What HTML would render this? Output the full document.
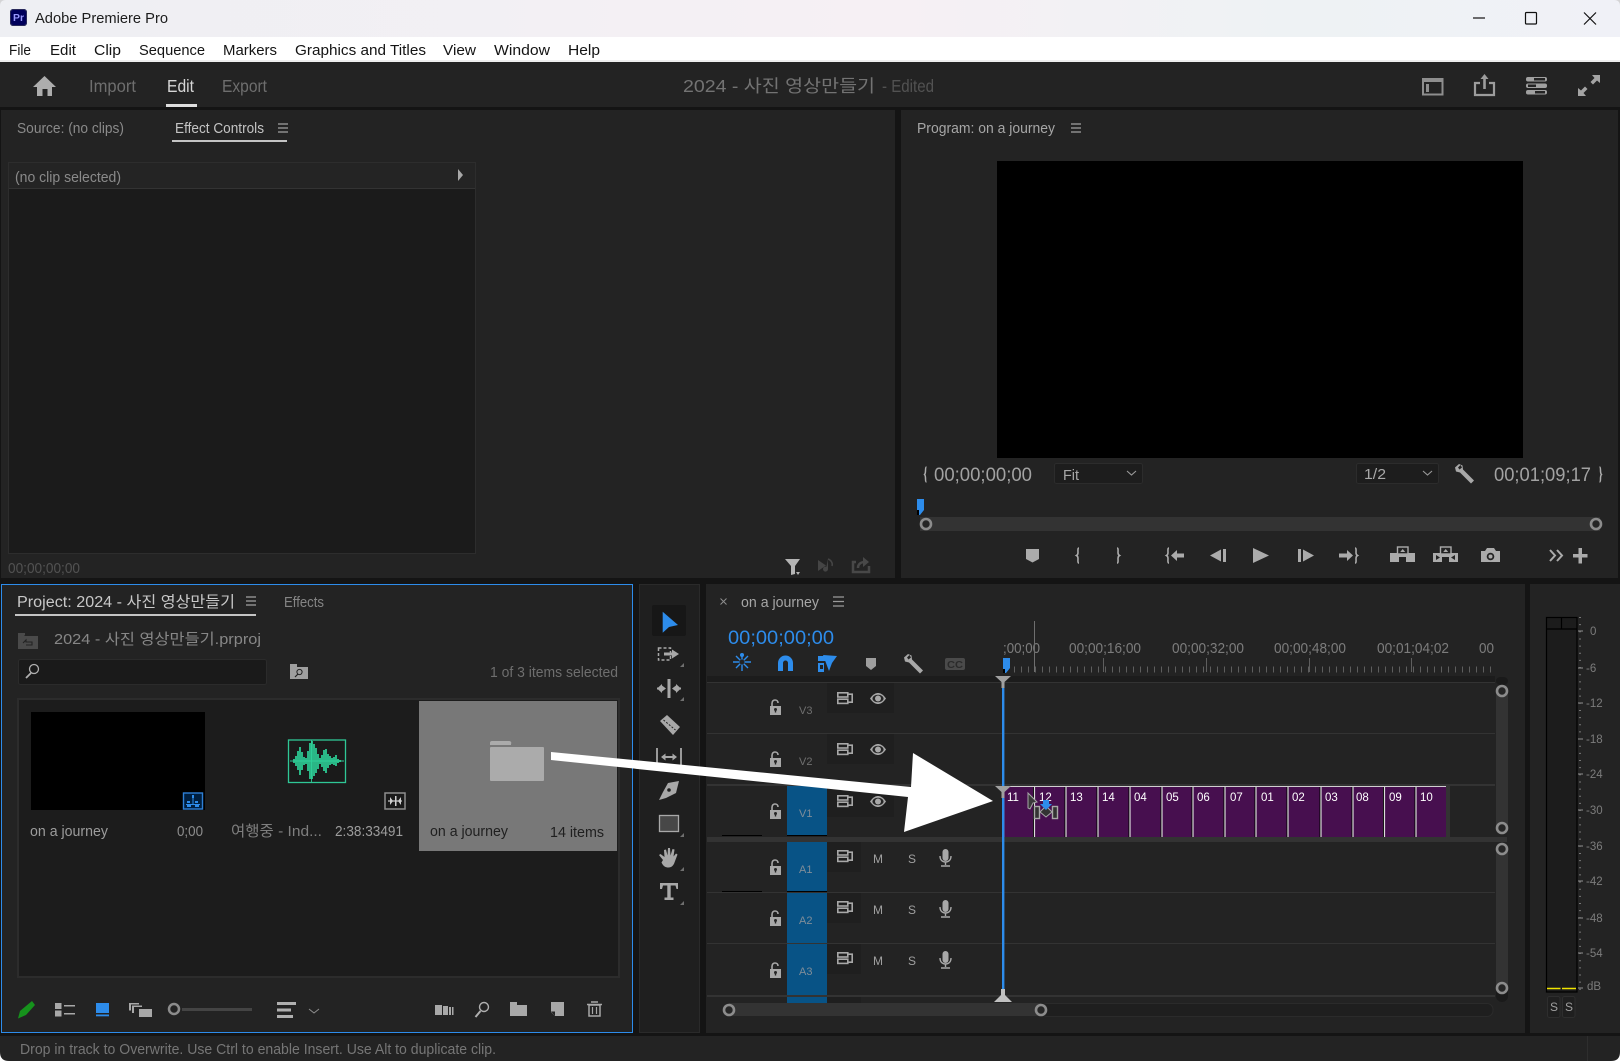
<!DOCTYPE html>
<html><head><meta charset="utf-8"><title>Adobe Premiere Pro</title>
<style>html,body{margin:0;padding:0;background:#fff;overflow:hidden}svg{display:block}text{font-family:"Liberation Sans","Noto Sans CJK KR",sans-serif;white-space:pre}</style></head>
<body>
<svg xmlns="http://www.w3.org/2000/svg" width="1620" height="1061" viewBox="0 0 1620 1061">
<defs>
<linearGradient id="tb" x1="0" x2="1" y1="0" y2="0"><stop offset="0" stop-color="#eeeff3"/><stop offset=".55" stop-color="#f6f0f4"/><stop offset=".8" stop-color="#eef2f4"/><stop offset="1" stop-color="#f0f1f7"/></linearGradient>
<g id="tg" fill="none" stroke="#a8a8a8" stroke-width="1.6"><rect x=".8" y=".8" width="10" height="4.2"/><rect x=".8" y="7.2" width="10" height="4.2"/><path d="M11 2.2h4.2v8H11" /></g>
<g id="eye"><path d="M0 5.5C3 1 6 0 8 0s5 1 8 5.5C13 10 10 11 8 11S3 10 0 5.5Z" fill="#a8a8a8"/><ellipse cx="8" cy="5.5" rx="5.6" ry="3.8" fill="#262626"/><circle cx="8" cy="5.5" r="3" fill="#a8a8a8"/></g>
<g id="lock"><path d="M2 7V3.5C2 1 3.5 0 5 0s3 1 3 3" fill="none" stroke="#a8a8a8" stroke-width="1.6"/><path d="M0 6h11v9H0z" fill="#a8a8a8"/><circle cx="5.5" cy="9.5" r="1.5" fill="#262626"/><path d="M4.8 9.5h1.4v3H4.8z" fill="#262626"/></g>
<g id="mic"><rect x="3.5" y="0" width="6" height="12" rx="3" fill="#a8a8a8"/><path d="M1 7c0 4 2.500 6 5.500 6s5.500-2 5.500-6M6.500 13v3M2 17h9" fill="none" stroke="#a8a8a8" stroke-width="1.4"/></g>
<g id="knob"><circle r="5" fill="#262626" stroke="#8c8c8c" stroke-width="2.600"/></g>
<g id="wr"><path d="M4 0L0 3.500l1 4 4 1L16 19.500l3-3L8 5.500 7.500 1.500z" fill="#a8a8a8"/><path d="M3 3.500l2.500-2.500 1.500 2.500-2.500 2z" fill="#232323"/></g>
</defs>

<!-- window chrome -->
<rect width="1620" height="1061" fill="#141414"/>
<rect width="1620" height="37" fill="url(#tb)"/>
<rect y="37" width="1620" height="23" fill="#fff"/>
<rect y="60" width="1620" height="2" fill="#eeeeee"/>
<rect x="10" y="9" width="17" height="17" rx="3" fill="#0e1a6b"/>
<rect x="10.500" y="9.500" width="16" height="16" rx="3" fill="#00005b" stroke="#2a2a5a"/>
<text x="13" y="21" font-size="10" font-weight="700" fill="#9999ff" textLength="11" lengthAdjust="spacingAndGlyphs">Pr</text>
<text x="35" y="23" font-size="15" fill="#1c1c1c" textLength="133" lengthAdjust="spacingAndGlyphs">Adobe Premiere Pro</text>
<path d="M1473 18h12" stroke="#111" stroke-width="1.200"/>
<rect x="1525.500" y="12.500" width="11" height="11.500" rx="1" fill="none" stroke="#111" stroke-width="1.200"/>
<path d="M1584 12.500l12 12M1596 12.500l-12 12" stroke="#111" stroke-width="1.200"/>
<g font-size="15" fill="#141414">
<text x="9" y="55" textLength="22" lengthAdjust="spacingAndGlyphs">File</text>
<text x="50" y="55" textLength="26" lengthAdjust="spacingAndGlyphs">Edit</text>
<text x="94" y="55" textLength="27" lengthAdjust="spacingAndGlyphs">Clip</text>
<text x="139" y="55" textLength="66" lengthAdjust="spacingAndGlyphs">Sequence</text>
<text x="223" y="55" textLength="54" lengthAdjust="spacingAndGlyphs">Markers</text>
<text x="295" y="55" textLength="131" lengthAdjust="spacingAndGlyphs">Graphics and Titles</text>
<text x="443" y="55" textLength="33" lengthAdjust="spacingAndGlyphs">View</text>
<text x="494" y="55" textLength="56" lengthAdjust="spacingAndGlyphs">Window</text>
<text x="568" y="55" textLength="32" lengthAdjust="spacingAndGlyphs">Help</text>
</g>

<!-- header -->
<rect y="62" width="1620" height="45" fill="#232323"/>
<path d="M44.500 76L33 87h4v9h5.500v-7h5v7H52v-9h4z" fill="#adadad"/>
<g font-size="17.500">
<text x="89" y="92" fill="#6e6e6e" textLength="47" lengthAdjust="spacingAndGlyphs">Import</text>
<text x="167" y="92" fill="#d6d6d6" textLength="27" lengthAdjust="spacingAndGlyphs">Edit</text>
<text x="222" y="92" fill="#6e6e6e" textLength="45" lengthAdjust="spacingAndGlyphs">Export</text>
<text x="683" y="92" fill="#737373" textLength="192" lengthAdjust="spacingAndGlyphs">2024 - 사진 영상만들기</text>
<text x="882" y="92" fill="#525252" textLength="52" lengthAdjust="spacingAndGlyphs">- Edited</text>
</g>
<rect x="166" y="104" width="31" height="3" fill="#dedede"/>
<!-- header right icons -->
<rect x="1423" y="79" width="19.500" height="15.500" fill="none" stroke="#8e8e8e" stroke-width="2"/><rect x="1423" y="79" width="19.500" height="3" fill="#8e8e8e"/><path d="M1426 84h3v8h-3z" fill="#8e8e8e"/>
<path d="M1480 83h-5v12h19V83h-5" fill="none" stroke="#9c9c9c" stroke-width="2.200"/><path d="M1484.500 74l-4 5h2.700v10h2.600V79h2.700z" fill="#9c9c9c"/>
<g fill="#a0a0a0"><rect x="1526" y="77" width="21" height="4.500" rx="2"/><rect x="1526" y="83.500" width="21" height="4.500" rx="2"/><rect x="1526" y="90" width="21" height="4.500" rx="2"/></g><g fill="#232323"><rect x="1534" y="78" width="11" height="2.500"/><rect x="1528" y="84.500" width="8" height="2.500"/><rect x="1535" y="91" width="10" height="2.500"/></g>
<path d="M1592 75h8v8l-3-2.500-4 4-2.500-2.500 4-4zM1578 96v-8l3 2.500 4-4 2.500 2.500-4 4 2.500 3z" fill="#a4a4a4"/>

<!-- source panel -->
<rect x="1" y="110" width="894" height="468" fill="#232323"/>
<g font-size="15">
<text x="17" y="133" fill="#8a8a8a" textLength="107" lengthAdjust="spacingAndGlyphs">Source: (no clips)</text>
<text x="175" y="133" fill="#c4c4c4" textLength="89" lengthAdjust="spacingAndGlyphs">Effect Controls</text>
</g>
<path d="M278 124h10M278 128h10M278 132h10" stroke="#a2a2a2" stroke-width="1.300"/>
<rect x="172" y="140" width="115" height="2" fill="#c4c4c4"/>
<rect x="8.500" y="162.500" width="467" height="391" fill="#1b1b1b" stroke="#2d2d2d"/>
<rect x="9" y="163" width="466" height="25" fill="#242424"/><path d="M9 188.500h466" stroke="#333"/>
<text x="15" y="182" font-size="15" fill="#8a8a8a" textLength="106" lengthAdjust="spacingAndGlyphs">(no clip selected)</text>
<path d="M458 169l5 6-5 6z" fill="#a8a8a8"/>
<text x="8" y="573" font-size="15" fill="#525252" textLength="72" lengthAdjust="spacingAndGlyphs">00;00;00;00</text>
<path d="M785 559h15l-5 7v8l-4 1v-9z" fill="#b4b4b4"/><path d="M796 572h4l-2 3z" fill="#b4b4b4"/>
<path d="M818 560l8 5.500-8 5.500zM828 559v10a2.500 2.500 0 1 1-1.600-2.200" fill="#454545"/><path d="M828 559c3 1 5 4 4 7" fill="none" stroke="#454545" stroke-width="1.500"/>
<path d="M856 562h-3v10h16v-6M858 568c0-4 3-6 7-6" fill="none" stroke="#484848" stroke-width="2.500"/><path d="M863 557l6 5-6 5z" fill="#484848"/>

<!-- program panel -->
<rect x="901" y="110" width="717" height="468" fill="#232323"/>
<text x="917" y="133" font-size="15" fill="#a6a6a6" textLength="138" lengthAdjust="spacingAndGlyphs">Program: on a journey</text>
<path d="M1071 124h10M1071 128h10M1071 132h10" stroke="#a2a2a2" stroke-width="1.300"/>
<rect x="997" y="161" width="526" height="297" fill="#000"/>
<g fill="none" stroke="#adadad" stroke-width="1.500"><path d="M926.500 467c-1 0-1 2-1 3.500s0 3-1 4c1 1 1 2.500 1 4s0 3.500 1 3.500"/><path d="M1599.500 467c1 0 1 2 1 3.500s0 3 1 4c-1 1-1 2.500-1 4s0 3.500-1 3.500"/></g>
<text x="934" y="481" font-size="19.500" fill="#a2a2a2" textLength="98" lengthAdjust="spacingAndGlyphs">00;00;00;00</text>
<text x="1494" y="481" font-size="19.500" fill="#a2a2a2" textLength="97" lengthAdjust="spacingAndGlyphs">00;01;09;17</text>
<rect x="1054.500" y="463.500" width="88" height="20" rx="2" fill="#1d1d1d" stroke="#2c2c2c"/>
<rect x="1356.500" y="463.500" width="82" height="20" rx="2" fill="#1d1d1d" stroke="#2c2c2c"/>
<text x="1063" y="480" font-size="15" fill="#a8a8a8" textLength="16" lengthAdjust="spacingAndGlyphs">Fit</text>
<text x="1364" y="479" font-size="15" fill="#a8a8a8" textLength="22" lengthAdjust="spacingAndGlyphs">1/2</text>
<path d="M1127 471l4.500 4 4.500-4M1423 471l4.500 4 4.500-4" fill="none" stroke="#9a9a9a" stroke-width="1.100"/>
<use href="#wr" x="1455" y="464"/>
<rect x="920" y="517" width="680" height="14" fill="#333"/>
<path d="M917 499h7v11l-4 5h-3z" fill="#2d8ceb"/><rect x="917" y="510" width="2" height="5" fill="#000"/>
<use href="#knob" x="926" y="524"/><use href="#knob" x="1596" y="524"/>
<!-- transport -->
<g fill="#ababab">
<path d="M1026 549h13v10l-6.500 3.500-6.500-3.500z"/>
<g fill="none" stroke="#ababab" stroke-width="1.600"><path d="M1079 548c-1.500 0-1 3-1 4.500s-.5 2.500-1.500 3c1 .5 1.500 1.500 1.500 3s-.5 4.500 1 4.500"/><path d="M1117 548c1.500 0 1 3 1 4.500s.5 2.500 1.500 3c-1 .5-1.500 1.500-1.500 3s.5 4.500-1 4.500"/><path d="M1169 548c-1.500 0-1 3-1 4.500s-.5 2.500-1.500 3c1 .5 1.500 1.500 1.500 3s-.5 4.500 1 4.500"/><path d="M1355 548c1.500 0 1 3 1 4.500s.5 2.500 1.500 3c-1 .5-1.500 1.500-1.500 3s.5 4.500-1 4.500"/></g>
<path d="M1171 555.500l6-5.500v3.500h7v4h-7v3.500z"/>
<path d="M1210 555.500l11-6v12zM1223 549h3v13h-3z"/>
<path d="M1253 548l16 7.500-16 7.500z"/>
<path d="M1298 549h3v13h-3zM1303 549.500l11 6-11 6z"/>
<path d="M1353 555.500l-6-5.500v3.500h-8v4h8v3.500z"/>
<path d="M1390 553h25v9h-9v-5h-7v5h-9z"/><rect x="1397.500" y="547" width="10.500" height="7" fill="#232323" stroke="#ababab" stroke-width="1.400"/><path d="M1402.700 549l-2.500 3h5z"/>
<path d="M1433 553h25v9h-9v-5h-7v5h-9z"/><rect x="1440.500" y="547" width="10.500" height="7" fill="#232323" stroke="#ababab" stroke-width="1.400"/><path d="M1445.700 549l-2.500 3h5z"/><path d="M1436 555l4 2.500-4 2.500zM1455 555l-4 2.500 4 2.500z" fill="#232323"/>
<path d="M1481 551h4l2-3h7l2 3h4v11h-19z"/><circle cx="1490.500" cy="556.500" r="3.800" fill="#232323"/><circle cx="1490.500" cy="556.500" r="2" fill="#ababab"/>
<path d="M1550 550l5 5.500-5 5.500M1557 550l5 5.500-5 5.500" fill="none" stroke="#ababab" stroke-width="2"/>
<path d="M1578.500 548h3.500v6h5.500v3.500H1582v6h-3.500v-6H1573V554h5.500z"/>
</g>

<!-- project panel -->
<rect x="1.500" y="584.500" width="631" height="448" fill="#232323" stroke="#2d8ceb"/>
<text x="17" y="607" font-size="15.500" fill="#c8c8c8" textLength="218" lengthAdjust="spacingAndGlyphs">Project: 2024 - 사진 영상만들기</text>
<path d="M246 597h10M246 601h10M246 605h10" stroke="#a2a2a2" stroke-width="1.300"/>
<rect x="15" y="614" width="241" height="2" fill="#c4c4c4"/>
<text x="284" y="607" font-size="15" fill="#858585" textLength="40" lengthAdjust="spacingAndGlyphs">Effects</text>
<path d="M18 636h6l1-1v-2h-7zM18 636h20v13H18z" fill="#4a4a4a"/><path d="M23 643l3-3v2h6v3h-6" fill="none" stroke="#222" stroke-width="1.100"/>
<text x="54" y="644" font-size="15" fill="#878787" textLength="207" lengthAdjust="spacingAndGlyphs">2024 - 사진 영상만들기.prproj</text>
<rect x="18.500" y="659.500" width="248" height="25" rx="2" fill="#1a1a1a" stroke="#2b2b2b"/>
<circle cx="34" cy="669" r="4.500" fill="none" stroke="#b0b0b0" stroke-width="1.300"/><path d="M31 673l-5 5" stroke="#b0b0b0" stroke-width="1.800"/>
<path d="M290 664h7v3h-7zM290 667h18v12h-18z" fill="#9f9f9f"/><circle cx="299.500" cy="672" r="2.600" fill="none" stroke="#222"/><path d="M298 674l-3 3" stroke="#222" stroke-width="1.200"/>
<text x="490" y="677" font-size="15" fill="#6e6e6e" textLength="128" lengthAdjust="spacingAndGlyphs">1 of 3 items selected</text>
<!-- grid -->
<rect x="18" y="699" width="601" height="278" fill="#1c1c1c" stroke="#2c2c2c" stroke-width="2"/>
<rect x="31" y="712" width="174" height="98" fill="#000"/>
<rect x="183.500" y="793" width="19" height="16" fill="#001f3f" stroke="#2d7fd6" stroke-width="1.400"/>
<path d="M192 795h2v3h-2zM192.500 798h1v6h-1zM186 804h14v1h-14z" fill="#2d8ceb"/><path d="M187 801h3v2h-3zM195 801h3v2h-3zM187 805h4v2h-4zM195 805h4v2h-4z" fill="#2d8ceb"/>
<rect x="288.500" y="740" width="57" height="42.500" fill="#1a1a1a" stroke="#2fc796" stroke-width="1.300"/>
<path d="M290 761h54M311.500 740v42" stroke="#2fc796" stroke-width=".9"/>
<path d="M294 759v4M296 756v10M298 751v19M300 747v28M302 752v18M304 757v8M306 758v6M308 751v20M310 743v36M312 741v38M314 744v32M316 748v25M318 754v15M320 758v6M322 755v12M324 750v21M326 749v24M328 754v14M330 756v9M332 758v6M334 757v8M336 755v11M338 759v4M340 760v2" stroke="#2ed39a" stroke-width="1.700"/>
<rect x="385" y="793" width="20" height="16" fill="#1a1a1a" stroke="#8e8e8e" stroke-width="1.500"/>
<path d="M388 801h14" stroke="#d0d0d0" stroke-width="1.200"/><path d="M390 797l3 4-3 4zM395 796v10h1.500v-10zM401 797l-3 4 3 4z" fill="#d0d0d0"/>
<rect x="419" y="701" width="198" height="150" fill="#787878"/>
<path d="M490 743a2 2 0 0 1 2-2h17a2 2 0 0 1 2 3v1h-21z" fill="#ababab"/><rect x="490" y="747" width="54" height="34" rx="1" fill="#ababab"/>
<g font-size="15">
<text x="30" y="836" fill="#9c9c9c" textLength="78" lengthAdjust="spacingAndGlyphs">on a journey</text>
<text x="177" y="836" fill="#8c8c8c" textLength="26" lengthAdjust="spacingAndGlyphs">0;00</text>
<text x="231" y="836" fill="#7e7e7e" textLength="91" lengthAdjust="spacingAndGlyphs">여행중 - Ind...</text>
<text x="335" y="836" fill="#9c9c9c" textLength="68" lengthAdjust="spacingAndGlyphs">2:38:33491</text>
<text x="430" y="836" fill="#1f1f1f" textLength="78" lengthAdjust="spacingAndGlyphs">on a journey</text>
<text x="550" y="837" fill="#1f1f1f" textLength="54" lengthAdjust="spacingAndGlyphs">14 items</text>
</g>
<!-- project bottom icons -->
<path d="M32 1001l3 4-9 10-8 3.500 2-7.500z" fill="#16921c"/>
<g fill="#a8a8a8"><rect x="55" y="1003" width="6.500" height="6"/><rect x="55" y="1010.500" width="6.500" height="6"/><rect x="64" y="1005" width="11" height="1.500"/><rect x="64" y="1013" width="11" height="1.500"/></g>
<rect x="96" y="1003" width="13" height="10" fill="#2d8ceb"/><rect x="96" y="1014.500" width="13" height="1.800" fill="#2d8ceb"/>
<g fill="#a8a8a8"><path d="M129 1003h10v1.500h-8v6h-2zM132 1005.500h10v1.500h-8v6h-2z"/><rect x="139" y="1009" width="13" height="8"/></g>
<rect x="182" y="1008" width="70" height="3" fill="#444"/><circle cx="174" cy="1009" r="5" fill="#232323" stroke="#8c8c8c" stroke-width="2.500"/>
<g fill="#b0b0b0"><rect x="277" y="1002" width="19" height="3"/><rect x="277" y="1008.500" width="14" height="3"/><rect x="277" y="1015" width="16" height="3"/></g>
<path d="M309 1009l5 4 5-4" fill="none" stroke="#8e8e8e" stroke-width="1"/>
<g fill="#a8a8a8"><rect x="435" y="1005" width="7" height="10"/><rect x="443" y="1006" width="5" height="9"/><rect x="449" y="1007" width="2" height="8"/><rect x="452" y="1007" width="1.500" height="8"/></g>
<circle cx="484" cy="1007" r="4.500" fill="none" stroke="#b0b0b0" stroke-width="1.400"/><path d="M480.500 1011l-5 6" stroke="#b0b0b0" stroke-width="2"/>
<path d="M510 1002h7v3h10v11h-17z" fill="#a8a8a8"/>
<path d="M551 1002h13v14h-9l-4-4z" fill="#a8a8a8"/><path d="M551 1011.500h4v4.500z" fill="#232323"/>
<path d="M591 1002h7M587 1004.500h15" stroke="#a8a8a8" stroke-width="1.400"/><rect x="589" y="1005" width="11" height="11" fill="none" stroke="#a8a8a8" stroke-width="1.500"/><path d="M592.500 1007v7M596.500 1007v7" stroke="#a8a8a8" stroke-width="1.200"/>

<!-- tools panel -->
<rect x="639.500" y="584.500" width="60" height="448" fill="#1f1f1f" stroke="#2a2a2a"/>
<rect x="652" y="605" width="34" height="31" rx="2" fill="#171717"/>
<path d="M662.700 611.700L678 625l-9 2-6.300 5.700z" fill="#2d8ceb"/>
<rect x="658.500" y="648" width="12" height="12" fill="none" stroke="#a8a8a8" stroke-width="1.500" stroke-dasharray="3 2"/><path d="M664 652.500h8v-3l7 4.500-7 4.500v-3h-8z" fill="#a8a8a8"/>
<path d="M667.500 679h3v19h-3zM666 688.500l-4-3v2h-5v2h5v2zM672 688.500l4-3v2h5v2h-5v2z" fill="#a8a8a8"/><path d="M657 688.500l5-4.500v9zM681 688.500l-5-4.500v9z" fill="#a8a8a8"/>
<path d="M660 721l7-6 13 12-7 8z" fill="#a8a8a8"/><path d="M663.500 720l12 10" stroke="#222" stroke-width="1" stroke-dasharray="2 1.500"/>
<path d="M657 748v18M681 748v18" stroke="#a8a8a8" stroke-width="1.800"/><path d="M661 757l4.500-3.500v2.500h7v-2.500l4.500 3.500-4.500 3.500V758h-7v2.500z" fill="#a8a8a8"/>
<path d="M679 781l-3 12-10 5-7 2 4-8 5-9zM659 800l6-6" fill="#a8a8a8"/><circle cx="669" cy="790" r="1.800" fill="#1f1f1f"/>
<rect x="659.500" y="815.500" width="19" height="16" fill="#474747" stroke="#a8a8a8" stroke-width="1.300"/>
<g transform="translate(0,6)"><path d="M663 854l-4-5 1.500-1 4 3-.5-7 2-.5 1.500 6 .5-7.500h2l.5 7.500 2-6.500 2 .5-1 7 2.500-3 1.500 1-3 8c-1 3-3 5-6 5s-5-1-7-5z" fill="#a8a8a8"/></g>
<path d="M660 883h18v6h-1.500l-1-3.500h-4.800v12h2.800v2.500h-9v-2.500h2.800v-12H663l-1 3.500H660z" fill="#a8a8a8"/>
<path d="M684 663v4h-4zM684 697v4h-4zM684 833v4h-4zM684 867v4h-4zM684 901v4h-4z" fill="#6f6f6f"/>

<!-- timeline panel -->
<rect x="706" y="584" width="819" height="449" fill="#232323"/>
<path d="M720.500 598.500l6 6M726.500 598.500l-6 6" stroke="#8e8e8e" stroke-width="1"/>
<text x="741" y="607" font-size="15" fill="#a6a6a6" textLength="78" lengthAdjust="spacingAndGlyphs">on a journey</text>
<path d="M833 597h11M833 601.500h11M833 606h11" stroke="#9a9a9a" stroke-width="1.300"/>
<text x="728" y="644" font-size="19.500" fill="#2d8ceb" textLength="106" lengthAdjust="spacingAndGlyphs">00;00;00;00</text>
<g fill="#2d8ceb">
<path d="M742 654v17M733 662h18M736 656l12 12M748 656l-12 12" stroke="#2d8ceb" stroke-width="1.400" fill="none"/><circle cx="742" cy="655" r="2"/><circle cx="742" cy="662" r="2.500" fill="#232323"/>
<path d="M778 671v-8a7.500 7.500 0 0 1 15 0v8h-5v-8a2.500 2.500 0 0 0-5 0v8z"/>
<path d="M818 656h7l1 5h-8zM818 663h6v9h-6z"/><path d="M823 655l14 1-5 7-3 8z"/><rect x="820" y="665" width="3" height="4" fill="#232323"/>
</g>
<path d="M866 658h10v8l-5 4-5-4z" fill="#9e9e9e"/>
<use href="#wr" x="904" y="654"/>
<rect x="945" y="658" width="20" height="12" rx="2" fill="#4a4a4a"/><text x="947" y="668" font-size="10" font-weight="700" fill="#2a2a2a" textLength="16" lengthAdjust="spacingAndGlyphs">CC</text>
<!-- ruler -->
<g font-size="15" fill="#7c7c7c">
<text x="1003" y="653" textLength="37" lengthAdjust="spacingAndGlyphs">;00;00</text>
<text x="1069" y="653" textLength="72" lengthAdjust="spacingAndGlyphs">00;00;16;00</text>
<text x="1172" y="653" textLength="72" lengthAdjust="spacingAndGlyphs">00;00;32;00</text>
<text x="1274" y="653" textLength="72" lengthAdjust="spacingAndGlyphs">00;00;48;00</text>
<text x="1377" y="653" textLength="72" lengthAdjust="spacingAndGlyphs">00;01;04;02</text>
<text x="1479" y="653" textLength="15" lengthAdjust="spacingAndGlyphs">00</text>
</g>
<path d="M1014 669.500H1497" stroke="#5e5e5e" stroke-width="6" stroke-dasharray="1 6"/>
<path d="M1103.500 658v14M1206.500 658v14M1309.500 658v14M1411.500 658v14" stroke="#5e5e5e" stroke-width="1"/>
<path d="M1034.500 621v51" stroke="#6e6e6e"/>
<path d="M1003 658h7v10l-4 5h-3z" fill="#2d8ceb"/><rect x="1003" y="669" width="2" height="4" fill="#000"/>
<!-- tracks -->
<rect x="707" y="676" width="788" height="6" fill="#1c1c1c"/>
<path d="M707 682.500h788M707 733.500h788M707 892.500h788M707 943.500h788" stroke="#333"/>
<rect x="707" y="784" width="788" height="2" fill="#333"/>
<rect x="707" y="837" width="800" height="5" fill="#333"/>
<rect x="707" y="995" width="788" height="2" fill="#333"/>
<g fill="#085386">
<rect x="787" y="786" width="40" height="49"/>
<rect x="787" y="842" width="40" height="49"/>
<rect x="787" y="893" width="40" height="50"/>
<rect x="787" y="944" width="40" height="51"/>
<rect x="787" y="997" width="40" height="6"/>
</g>
<path d="M722 835.500h40M787 835.500h40M722 891.500h40M787 891.500h40" stroke="#000" stroke-width="1"/>
<g fill="#1f1f1f">
<rect x="827" y="683" width="67" height="30"/><rect x="827" y="734" width="67" height="30"/><rect x="827" y="787" width="67" height="30"/>
<rect x="827" y="842" width="34" height="30"/><rect x="827" y="893" width="34" height="30"/><rect x="827" y="944" width="34" height="30"/><rect x="827" y="997" width="34" height="6"/>
</g>
<use href="#tg" x="837" y="692"/><use href="#tg" x="837" y="743"/><use href="#tg" x="837" y="795"/><use href="#tg" x="837" y="850"/><use href="#tg" x="837" y="901"/><use href="#tg" x="837" y="952"/>
<use href="#eye" x="870" y="693"/><use href="#eye" x="870" y="744"/><use href="#eye" x="870" y="796"/>
<use href="#lock" x="770" y="700"/><use href="#lock" x="770" y="752"/><use href="#lock" x="770" y="804"/><use href="#lock" x="770" y="860"/><use href="#lock" x="770" y="911"/><use href="#lock" x="770" y="963"/>
<g font-size="11" fill="#7a7a7a">
<text x="799" y="714" fill="#6f6f6f">V3</text><text x="799" y="765" fill="#6f6f6f">V2</text><text x="799" y="817" fill="#7f8d99">V1</text>
<text x="799" y="873" fill="#7f8d99">A1</text><text x="799" y="924" fill="#7f8d99">A2</text><text x="799" y="975" fill="#7f8d99">A3</text>
</g>
<g font-size="12" fill="#a0a0a0">
<text x="873" y="863" textLength="10" lengthAdjust="spacingAndGlyphs">M</text><text x="908" y="863" textLength="8" lengthAdjust="spacingAndGlyphs">S</text>
<text x="873" y="914" textLength="10" lengthAdjust="spacingAndGlyphs">M</text><text x="908" y="914" textLength="8" lengthAdjust="spacingAndGlyphs">S</text>
<text x="873" y="965" textLength="10" lengthAdjust="spacingAndGlyphs">M</text><text x="908" y="965" textLength="8" lengthAdjust="spacingAndGlyphs">S</text>
</g>
<use href="#mic" x="939" y="849"/><use href="#mic" x="939" y="900"/><use href="#mic" x="939" y="951"/>
<!-- clips -->
<rect x="1003" y="786" width="443" height="51" fill="#470f4f"/>
<rect x="1446" y="786" width="4" height="51" fill="#333"/>
<path d="M1003 786.500h443" stroke="#cfcfcf"/>
<path d="M1033.500 787v50M1065 787v50M1097 787v50M1129 787v50M1161 787v50M1192 787v50M1224 787v50M1255 787v50M1287 787v50M1320 787v50M1352 787v50M1383.500 787v50M1415 787v50" stroke="#000" stroke-width="1"/>
<path d="M1034.500 787v50M1066 787v50M1098 787v50M1130 787v50M1162 787v50M1193 787v50M1225 787v50M1256 787v50M1288 787v50M1321 787v50M1353 787v50M1384.500 787v50M1416 787v50" stroke="#dcdcdc" stroke-width="1.200"/>
<path d="M1003.500 787v50" stroke="#e6e6e6" stroke-width="1.500"/>
<g font-size="11.500" fill="#fff">
<text x="1007" y="801">11</text><text x="1039" y="801">12</text><text x="1070" y="801">13</text><text x="1102" y="801">14</text><text x="1134" y="801">04</text><text x="1166" y="801">05</text><text x="1197" y="801">06</text><text x="1230" y="801">07</text><text x="1261" y="801">01</text><text x="1292" y="801">02</text><text x="1325" y="801">03</text><text x="1356" y="801">08</text><text x="1389" y="801">09</text><text x="1420" y="801">10</text>
</g>
<!-- cursor -->
<path d="M1028 793l9 9-4 1-3 6-2-1z" fill="#3a3a3a" stroke="#a8a8a8"/>
<rect x="1034.500" y="806.500" width="5" height="12" fill="#333" stroke="#a8a8a8" stroke-width="1.400"/>
<rect x="1052.500" y="806.500" width="5" height="12" fill="#333" stroke="#a8a8a8" stroke-width="1.400"/>
<path d="M1040 812l6-6 6 6-6 5z" fill="#333" stroke="#a8a8a8"/>
<path d="M1043 800h6v4h3l-6 6-6-6h3z" fill="#2d8ceb"/>
<!-- scrollbars -->
<rect x="1496" y="677" width="12" height="8" rx="5" fill="#1a1a1a"/>
<rect x="1496" y="691" width="12" height="137" fill="#333"/>
<rect x="1496" y="849" width="12" height="139" fill="#333"/>
<rect x="1496" y="985" width="12" height="17" rx="6" fill="#1a1a1a"/>
<use href="#knob" x="1502" y="691"/><use href="#knob" x="1502" y="828"/><use href="#knob" x="1502" y="849"/><use href="#knob" x="1502" y="988"/>
<rect x="729" y="1003" width="312" height="13" fill="#333"/>
<rect x="1041" y="1003.500" width="452" height="13" rx="6" fill="#1f1f1f" stroke="#2b2b2b"/>
<use href="#knob" x="729" y="1010"/><use href="#knob" x="1041" y="1010"/>
<!-- playhead -->
<rect x="1002" y="680" width="2.400" height="312" fill="#2d8ceb"/>
<path d="M995 676h16l-6.500 6v6h-3v-6z" fill="#a0a0a0"/>
<path d="M995 786h16l-6.500 6v6h-3v-6z" fill="#a0a0a0"/>
<path d="M994 1002h18l-7-7v-6h-4v6z" fill="#c0c0c0"/>

<!-- meter panel -->
<rect x="1530" y="584" width="90" height="449" fill="#232323"/>
<rect x="1546.500" y="617.500" width="30.500" height="374.500" fill="#1c1c1c" stroke="#000" stroke-width="1.200"/>
<path d="M1546 629h31M1561.500 617v12" stroke="#000" stroke-width="1.200"/>
<path d="M1580 617V992" stroke="#777" stroke-width="2" stroke-dasharray="1 6.150" fill="none"/>
<path d="M1578 631h5M1578 668h5M1578 703h5M1578 739h5M1578 774h5M1578 810h5M1578 846h5M1578 881h5M1578 918h5M1578 953h5M1578 988h5" stroke="#7a7a7a" stroke-width="1.200"/>
<g font-size="11.500" fill="#7c7c7c">
<text x="1590" y="635">0</text><text x="1586" y="672">-6</text><text x="1586" y="707">-12</text><text x="1586" y="743">-18</text><text x="1586" y="778">-24</text><text x="1586" y="814">-30</text><text x="1586" y="850">-36</text><text x="1586" y="885">-42</text><text x="1586" y="922">-48</text><text x="1586" y="957">-54</text><text x="1587" y="990">dB</text>
</g>
<path d="M1547 988.500h13.500M1562 988.500h14" stroke="#f0e400" stroke-width="1.600"/>
<rect x="1547.500" y="996.500" width="12.500" height="21" rx="2" fill="#1f1f1f" stroke="#2e2e2e"/>
<rect x="1562.500" y="996.500" width="12.500" height="21" rx="2" fill="#1f1f1f" stroke="#2e2e2e"/>
<text x="1550" y="1011" font-size="12" fill="#a0a0a0">S</text><text x="1565" y="1011" font-size="12" fill="#a0a0a0">S</text>

<!-- status bar -->
<rect y="1036" width="1620" height="25" fill="#232323"/>
<text x="20" y="1054" font-size="15" fill="#767676" textLength="476" lengthAdjust="spacingAndGlyphs">Drop in track to Overwrite. Use Ctrl to enable Insert. Use Alt to duplicate clip.</text>
<path d="M1587.500 1036v25" stroke="#2e2e2e"/>

<!-- big arrow -->
<path d="M551 752L911 787 913 753 993 801 904 832 908 797 551 760Z" fill="#fff"/>

<!-- corners -->
<path d="M0 1061v-9q0 9 9 9zM1620 1061v-9q0 9-9 9z" fill="#fff"/>
<path d="M0 0h6q-6 0-6 6zM1620 0h-6q6 0 6 6z" fill="#d4d4d6"/>
</svg>
</body></html>
